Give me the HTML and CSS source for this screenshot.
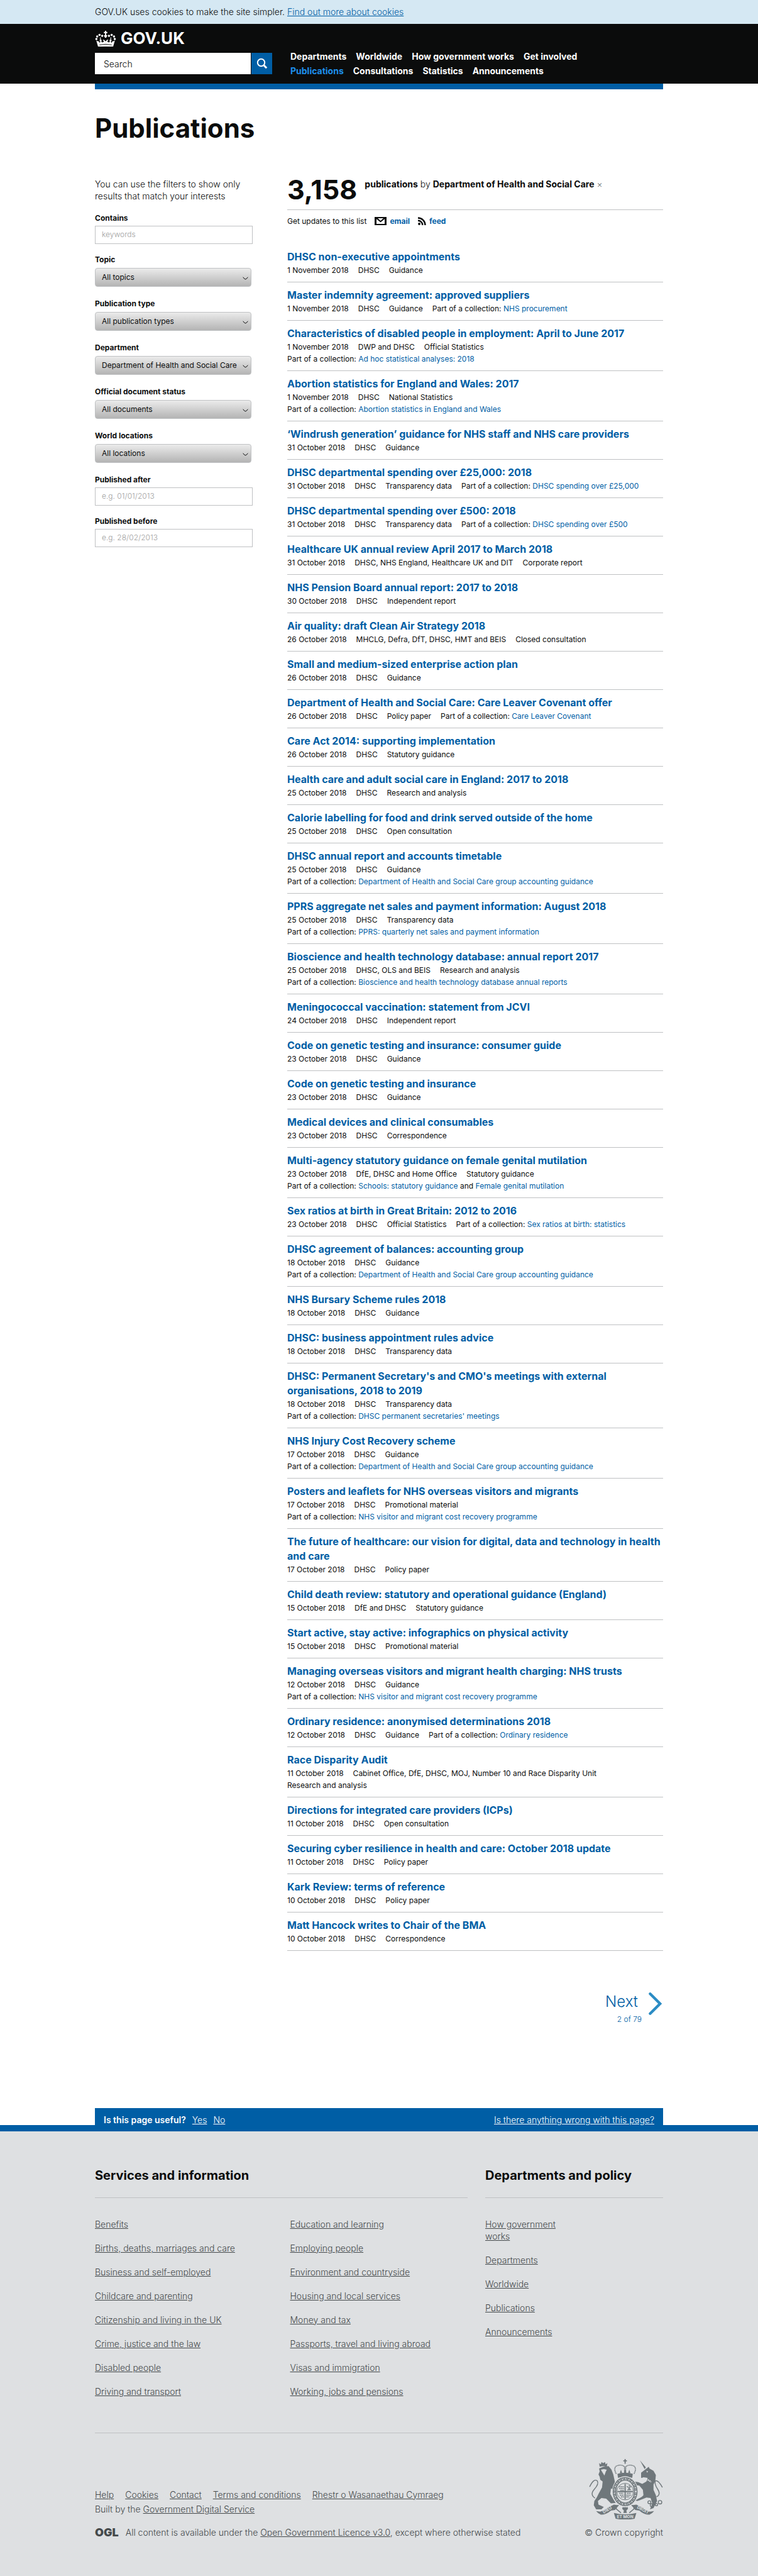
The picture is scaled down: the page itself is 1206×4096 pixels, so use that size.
FILE: index.html
```html
<!DOCTYPE html>
<html lang="en">
<head>
<meta charset="utf-8">
<meta name="viewport" content="width=device-width, initial-scale=1">
<title>Publications - GOV.UK</title>
<link rel="stylesheet" href="styles.css">
</head>
<body>

<div class="cookie-bar">
  <p class="container">GOV.UK uses cookies to make the site simpler. <a href="#">Find out more about cookies</a></p>
</div>

<header class="site-header">
  <div class="container header-inner">
    <div class="header-left">
      <a class="logo" href="#">
        <svg class="logo-crown" viewBox="0 0 36 27" aria-hidden="true">
          <g fill="currentColor">
            <path d="M17 0h2v2h2v2h-2v3l2 1-2 4h-2l-2-4 2-1V4h-2V2h2z"/>
            <circle cx="2.2" cy="14" r="1.9"/><circle cx="3.6" cy="9.6" r="1.9"/><circle cx="7.6" cy="7" r="1.9"/><circle cx="12.2" cy="8.6" r="1.9"/>
            <circle cx="33.8" cy="14" r="1.9"/><circle cx="32.4" cy="9.6" r="1.9"/><circle cx="28.4" cy="7" r="1.9"/><circle cx="23.8" cy="8.6" r="1.9"/>
            <path d="M2 16.5q2 2 4.5 1.500L8 21l1-3-1.500-1.500L9 14l-1-1.500L9 11l1 1.500L9.500 14l2 2.500L10.500 18l1.500 2 3-1-.5-2L13 16l2-1 3 3 3-3 2 1-1.500 1-.5 2 3 1 1.500-2-1-1.500 2-2.500-.5-1.500 1-1.500 1 1.500-1 1.500 1.500 2.500-1.500 1.500 1 3 1.500-3q2.500.5 4.500-1.500L31 27H5z"/>
          </g>
          <path d="M7.500 24.200q10.500-2.200 21 0" fill="none" stroke="#0b0c0c" stroke-width="1"/>
        </svg>
        <span>GOV.UK</span>
      </a>
      <form class="search" role="search">
        <input type="search" placeholder="Search" aria-label="Search">
        <button type="button" aria-label="Search">
          <svg viewBox="0 0 18 18" aria-hidden="true"><circle cx="7.500" cy="7.500" r="5.700" fill="none" stroke="#fff" stroke-width="2"/><path d="M11.500 11.500l4.700 4.700" stroke="#fff" stroke-width="3"/></svg>
        </button>
      </form>
    </div>
    <nav class="main-nav">
      <ul>
        <li><a href="#">Departments</a></li>
        <li><a href="#">Worldwide</a></li>
        <li><a href="#">How government works</a></li>
        <li><a href="#">Get involved</a></li>
      </ul>
      <ul>
        <li><a class="current" href="#">Publications</a></li>
        <li><a href="#">Consultations</a></li>
        <li><a href="#">Statistics</a></li>
        <li><a href="#">Announcements</a></li>
      </ul>
    </nav>
  </div>
</header>
<div class="container blue-rule"></div>

<main class="container">
  <h1>Publications</h1>
  <div class="columns">
    <form class="filters">
      <p>You can use the filters to show only results that match your interests</p>
      <div class="field">
        <label for="contains">Contains</label>
        <input id="contains" type="text" placeholder="keywords">
      </div>
      <div class="field field-select">
        <label for="topic">Topic</label>
        <div class="select"><select id="topic"><option>All topics</option></select><svg viewBox="0 0 9 5"><path d="M.7.7Q3 4 4.500 4T8.300.7"/></svg></div>
      </div>
      <div class="field field-select">
        <label for="pubtype">Publication type</label>
        <div class="select"><select id="pubtype"><option>All publication types</option></select><svg viewBox="0 0 9 5"><path d="M.7.7Q3 4 4.500 4T8.300.7"/></svg></div>
      </div>
      <div class="field field-select">
        <label for="department">Department</label>
        <div class="select"><select id="department"><option>Department of Health and Social Care</option></select><svg viewBox="0 0 9 5"><path d="M.7.7Q3 4 4.500 4T8.300.7"/></svg></div>
      </div>
      <div class="field field-select">
        <label for="status">Official document status</label>
        <div class="select"><select id="status"><option>All documents</option></select><svg viewBox="0 0 9 5"><path d="M.7.7Q3 4 4.500 4T8.300.7"/></svg></div>
      </div>
      <div class="field field-select">
        <label for="locations">World locations</label>
        <div class="select"><select id="locations"><option>All locations</option></select><svg viewBox="0 0 9 5"><path d="M.7.7Q3 4 4.500 4T8.300.7"/></svg></div>
      </div>
      <div class="field">
        <label for="after">Published after</label>
        <input id="after" type="text" placeholder="e.g. 01/01/2013">
      </div>
      <div class="field">
        <label for="before">Published before</label>
        <input id="before" type="text" placeholder="e.g. 28/02/2013">
      </div>
    </form>

    <div class="results">
      <div class="summary">
        <span class="count">3,158</span>
        <p><b>publications</b> by <b>Department of Health and Social Care</b> <a href="#" aria-label="Remove filter">×</a></p>
      </div>
      <div class="updates">
        <span>Get updates to this list</span>
        <a href="#"><svg class="icon-mail" viewBox="0 0 19 13" aria-hidden="true"><path fill="#0b0c0c" d="M0 0h19v13H0z"/><path fill="#fff" d="M3 3.300l6.500 5.200L16 3.300V11H3z"/><path fill="#fff" d="M5 2h9L9.500 6z"/></svg>email</a>
        <a href="#"><svg class="icon-feed" viewBox="0 0 13 13" aria-hidden="true"><circle cx="2" cy="11" r="1.900" fill="#0b0c0c"/><path d="M0 5.700a7.200 7.200 0 0 1 7.300 7.300M0 1.500A11.500 11.500 0 0 1 11.500 13" fill="none" stroke="#0b0c0c" stroke-width="2.400"/></svg>feed</a>
      </div>

      <ol class="documents">
        <li><h2><a href="#">DHSC non-executive appointments</a></h2><ul><li>1 November 2018</li><li>DHSC</li><li>Guidance</li></ul></li>
        <li><h2><a href="#">Master indemnity agreement: approved suppliers</a></h2><ul><li>1 November 2018</li><li>DHSC</li><li>Guidance</li><li>Part of a collection: <a href="#">NHS procurement</a></li></ul></li>
        <li><h2><a href="#">Characteristics of disabled people in employment: April to June 2017</a></h2><ul><li>1 November 2018</li><li>DWP and DHSC</li><li>Official Statistics</li><li>Part of a collection: <a href="#">Ad hoc statistical analyses: 2018</a></li></ul></li>
        <li><h2><a href="#">Abortion statistics for England and Wales: 2017</a></h2><ul><li>1 November 2018</li><li>DHSC</li><li>National Statistics</li><li>Part of a collection: <a href="#">Abortion statistics in England and Wales</a></li></ul></li>
        <li><h2><a href="#">‘Windrush generation’ guidance for NHS staff and NHS care providers</a></h2><ul><li>31 October 2018</li><li>DHSC</li><li>Guidance</li></ul></li>
        <li><h2><a href="#">DHSC departmental spending over £25,000: 2018</a></h2><ul><li>31 October 2018</li><li>DHSC</li><li>Transparency data</li><li>Part of a collection: <a href="#">DHSC spending over £25,000</a></li></ul></li>
        <li><h2><a href="#">DHSC departmental spending over £500: 2018</a></h2><ul><li>31 October 2018</li><li>DHSC</li><li>Transparency data</li><li>Part of a collection: <a href="#">DHSC spending over £500</a></li></ul></li>
        <li><h2><a href="#">Healthcare UK annual review April 2017 to March 2018</a></h2><ul><li>31 October 2018</li><li>DHSC, NHS England, Healthcare UK and DIT</li><li>Corporate report</li></ul></li>
        <li><h2><a href="#">NHS Pension Board annual report: 2017 to 2018</a></h2><ul><li>30 October 2018</li><li>DHSC</li><li>Independent report</li></ul></li>
        <li><h2><a href="#">Air quality: draft Clean Air Strategy 2018</a></h2><ul><li>26 October 2018</li><li>MHCLG, Defra, DfT, DHSC, HMT and BEIS</li><li>Closed consultation</li></ul></li>
        <li><h2><a href="#">Small and medium-sized enterprise action plan</a></h2><ul><li>26 October 2018</li><li>DHSC</li><li>Guidance</li></ul></li>
        <li><h2><a href="#">Department of Health and Social Care: Care Leaver Covenant offer</a></h2><ul><li>26 October 2018</li><li>DHSC</li><li>Policy paper</li><li>Part of a collection: <a href="#">Care Leaver Covenant</a></li></ul></li>
        <li><h2><a href="#">Care Act 2014: supporting implementation</a></h2><ul><li>26 October 2018</li><li>DHSC</li><li>Statutory guidance</li></ul></li>
        <li><h2><a href="#">Health care and adult social care in England: 2017 to 2018</a></h2><ul><li>25 October 2018</li><li>DHSC</li><li>Research and analysis</li></ul></li>
        <li><h2><a href="#">Calorie labelling for food and drink served outside of the home</a></h2><ul><li>25 October 2018</li><li>DHSC</li><li>Open consultation</li></ul></li>
        <li><h2><a href="#">DHSC annual report and accounts timetable</a></h2><ul><li>25 October 2018</li><li>DHSC</li><li>Guidance</li><li>Part of a collection: <a href="#">Department of Health and Social Care group accounting guidance</a></li></ul></li>
        <li><h2><a href="#">PPRS aggregate net sales and payment information: August 2018</a></h2><ul><li>25 October 2018</li><li>DHSC</li><li>Transparency data</li><li>Part of a collection: <a href="#">PPRS: quarterly net sales and payment information</a></li></ul></li>
        <li><h2><a href="#">Bioscience and health technology database: annual report 2017</a></h2><ul><li>25 October 2018</li><li>DHSC, OLS and BEIS</li><li>Research and analysis</li><li>Part of a collection: <a href="#">Bioscience and health technology database annual reports</a></li></ul></li>
        <li><h2><a href="#">Meningococcal vaccination: statement from JCVI</a></h2><ul><li>24 October 2018</li><li>DHSC</li><li>Independent report</li></ul></li>
        <li><h2><a href="#">Code on genetic testing and insurance: consumer guide</a></h2><ul><li>23 October 2018</li><li>DHSC</li><li>Guidance</li></ul></li>
        <li><h2><a href="#">Code on genetic testing and insurance</a></h2><ul><li>23 October 2018</li><li>DHSC</li><li>Guidance</li></ul></li>
        <li><h2><a href="#">Medical devices and clinical consumables</a></h2><ul><li>23 October 2018</li><li>DHSC</li><li>Correspondence</li></ul></li>
        <li><h2><a href="#">Multi-agency statutory guidance on female genital mutilation</a></h2><ul><li>23 October 2018</li><li>DfE, DHSC and Home Office</li><li>Statutory guidance</li><li>Part of a collection: <a href="#">Schools: statutory guidance</a> and <a href="#">Female genital mutilation</a></li></ul></li>
        <li><h2><a href="#">Sex ratios at birth in Great Britain: 2012 to 2016</a></h2><ul><li>23 October 2018</li><li>DHSC</li><li>Official Statistics</li><li>Part of a collection: <a href="#">Sex ratios at birth: statistics</a></li></ul></li>
        <li><h2><a href="#">DHSC agreement of balances: accounting group</a></h2><ul><li>18 October 2018</li><li>DHSC</li><li>Guidance</li><li>Part of a collection: <a href="#">Department of Health and Social Care group accounting guidance</a></li></ul></li>
        <li><h2><a href="#">NHS Bursary Scheme rules 2018</a></h2><ul><li>18 October 2018</li><li>DHSC</li><li>Guidance</li></ul></li>
        <li><h2><a href="#">DHSC: business appointment rules advice</a></h2><ul><li>18 October 2018</li><li>DHSC</li><li>Transparency data</li></ul></li>
        <li><h2><a href="#">DHSC: Permanent Secretary's and CMO's meetings with external organisations, 2018 to 2019</a></h2><ul><li>18 October 2018</li><li>DHSC</li><li>Transparency data</li><li>Part of a collection: <a href="#">DHSC permanent secretaries' meetings</a></li></ul></li>
        <li><h2><a href="#">NHS Injury Cost Recovery scheme</a></h2><ul><li>17 October 2018</li><li>DHSC</li><li>Guidance</li><li>Part of a collection: <a href="#">Department of Health and Social Care group accounting guidance</a></li></ul></li>
        <li><h2><a href="#">Posters and leaflets for NHS overseas visitors and migrants</a></h2><ul><li>17 October 2018</li><li>DHSC</li><li>Promotional material</li><li>Part of a collection: <a href="#">NHS visitor and migrant cost recovery programme</a></li></ul></li>
        <li><h2><a href="#">The future of healthcare: our vision for digital, data and technology in health and care</a></h2><ul><li>17 October 2018</li><li>DHSC</li><li>Policy paper</li></ul></li>
        <li><h2><a href="#">Child death review: statutory and operational guidance (England)</a></h2><ul><li>15 October 2018</li><li>DfE and DHSC</li><li>Statutory guidance</li></ul></li>
        <li><h2><a href="#">Start active, stay active: infographics on physical activity</a></h2><ul><li>15 October 2018</li><li>DHSC</li><li>Promotional material</li></ul></li>
        <li><h2><a href="#">Managing overseas visitors and migrant health charging: NHS trusts</a></h2><ul><li>12 October 2018</li><li>DHSC</li><li>Guidance</li><li>Part of a collection: <a href="#">NHS visitor and migrant cost recovery programme</a></li></ul></li>
        <li><h2><a href="#">Ordinary residence: anonymised determinations 2018</a></h2><ul><li>12 October 2018</li><li>DHSC</li><li>Guidance</li><li>Part of a collection: <a href="#">Ordinary residence</a></li></ul></li>
        <li><h2><a href="#">Race Disparity Audit</a></h2><ul><li>11 October 2018</li><li>Cabinet Office, DfE, DHSC, MOJ, Number 10 and Race Disparity Unit</li><li>Research and analysis</li></ul></li>
        <li><h2><a href="#">Directions for integrated care providers (ICPs)</a></h2><ul><li>11 October 2018</li><li>DHSC</li><li>Open consultation</li></ul></li>
        <li><h2><a href="#">Securing cyber resilience in health and care: October 2018 update</a></h2><ul><li>11 October 2018</li><li>DHSC</li><li>Policy paper</li></ul></li>
        <li><h2><a href="#">Kark Review: terms of reference</a></h2><ul><li>10 October 2018</li><li>DHSC</li><li>Policy paper</li></ul></li>
        <li><h2><a href="#">Matt Hancock writes to Chair of the BMA</a></h2><ul><li>10 October 2018</li><li>DHSC</li><li>Correspondence</li></ul></li>
      </ol>

      <nav class="pagination" aria-label="Pagination">
        <a href="#">
          <span class="next"><span>Next</span><small>2 of 79</small></span>
          <svg viewBox="0 0 22 38" aria-hidden="true"><path d="M2.500 2.500L19 19 2.500 35.500" fill="none" stroke="#2b8cc4" stroke-width="4.500" stroke-linecap="round"/></svg>
        </a>
      </nav>
    </div>
  </div>
</main>

<div class="feedback">
  <div class="container feedback-bar">
    <b>Is this page useful?</b> <a href="#">Yes</a> <a href="#">No</a>
    <a class="wrong" href="#">Is there anything wrong with this page?</a>
  </div>
</div>

<footer class="site-footer">
  <div class="container">
    <div class="footer-links">
      <section class="services">
        <h2>Services and information</h2>
        <ul>
          <li><a href="#">Benefits</a></li>
          <li><a href="#">Births, deaths, marriages and care</a></li>
          <li><a href="#">Business and self-employed</a></li>
          <li><a href="#">Childcare and parenting</a></li>
          <li><a href="#">Citizenship and living in the UK</a></li>
          <li><a href="#">Crime, justice and the law</a></li>
          <li><a href="#">Disabled people</a></li>
          <li><a href="#">Driving and transport</a></li>
          <li><a href="#">Education and learning</a></li>
          <li><a href="#">Employing people</a></li>
          <li><a href="#">Environment and countryside</a></li>
          <li><a href="#">Housing and local services</a></li>
          <li><a href="#">Money and tax</a></li>
          <li><a href="#">Passports, travel and living abroad</a></li>
          <li><a href="#">Visas and immigration</a></li>
          <li><a href="#">Working, jobs and pensions</a></li>
        </ul>
      </section>
      <section class="policy">
        <h2>Departments and policy</h2>
        <ul>
          <li><a href="#">How government works</a></li>
          <li><a href="#">Departments</a></li>
          <li><a href="#">Worldwide</a></li>
          <li><a href="#">Publications</a></li>
          <li><a href="#">Announcements</a></li>
        </ul>
      </section>
    </div>
    <div class="footer-meta">
      <div class="legal">
        <ul>
          <li><a href="#">Help</a></li>
          <li><a href="#">Cookies</a></li>
          <li><a href="#">Contact</a></li>
          <li><a href="#">Terms and conditions</a></li>
          <li><a href="#">Rhestr o Wasanaethau Cymraeg</a></li>
        </ul>
        <p>Built by the <a href="#">Government Digital Service</a></p>
        <div class="licence">
          <span class="ogl">OGL</span>
          <p>All content is available under the <a href="#">Open Government Licence v3.0</a>, except where otherwise stated</p>
        </div>
      </div>
      <div class="crest">
        <svg viewBox="0 0 125 102" aria-hidden="true">
          <g fill="#6f777b">
            <path d="M60 0h2v2h2v2h-2v4h-2V4h-2V2h2z"/>
            <path d="M48 25q13-4 26 0l-1 7q-12-4-24 0z"/>
            <path d="M52 24l2-6 2 6zM59 24l2-8 2 8zM66 24l2-6 2 6z"/>
            <path d="M18 13l-1-6 3 2 1-4 3 2 3-2 1 4 3-2-1 6-6-1z"/>
            <path d="M17 16l7-3 9-1 5 6 3 8 2 9 1 6 2 8-1 3-8-2-1 9 5 9 4 6-8 1-8-8-8-1-6 5 1 6 9 4-4 4h-9l-4-7 1-7 4-6 3-6 6-11 1-10-4-3-1-5-2-4 2-5z"/>
            <path d="M86 2l10 12-2 3z"/>
            <path d="M88 23l8-6 5-4 1 3 7 4 4 7-1 10-3 6v9l4 9 2 10-6 12-6 2 4-10-3-9-7-1-15 6-4-1 11-6 3-3-1-9-6-7-6-1-3-6 7 1 7 3 7-4 2-6-5-1-6 1z"/>
            <path d="M12 88l7 1q7-2 13-7l10-5 8 1-6 8-7 1q-8 7-17 7-5-2-8-6zM110 88l-7 1q-7-2-13-7l-10-5-8 1 6 8 7 1q8 7 17 7 5-2 8-6z"/>
            <path d="M42 91q19 5 38 0l-3 10q-16 3-32 0z"/>
            <path d="M60 82l1-3 1 3 3-1 1 3-3 3 1 4h-6l1-4-3-3 1-3z"/>
          </g>
          <g fill="none" stroke="#6f777b" stroke-width="1.500">
            <path d="M10 66Q1 60 9 51T14 37Q8 32 1 47"/>
            <path d="M114 64q8-4 2-13t-4-14q5-2 12 11"/>
            <path d="M46 25q-5-9 0-13 8-4 14 1v10M76 25q5-9 0-13-8-4-14 1v10" stroke-dasharray="2 .6"/>
            <circle cx="102" cy="73" r="2.500"/><circle cx="106" cy="78" r="2.500"/><circle cx="114" cy="77" r="2"/><circle cx="120" cy="73" r="3"/>
            <path d="M50 78q-7 5-2 8l6 5M72 78q7 5 2 8l-6 5"/>
          </g>
          <path d="M20 18l5-1 5 1-2 4-2 6-3-5zM97 20l3 1-2 2z" fill="#dee0e2"/>
          <path d="M91 32q8 2 14 7" fill="none" stroke="#dee0e2" stroke-width="2.500" stroke-dasharray="2 1"/>
          <ellipse cx="61" cy="55" rx="22" ry="26" fill="#dee0e2"/>
          <ellipse cx="61" cy="55" rx="18" ry="21.500" fill="none" stroke="#6f777b" stroke-width="6"/>
          <ellipse cx="61" cy="55" rx="18" ry="21.500" fill="none" stroke="#dee0e2" stroke-width="3" stroke-dasharray="1.500 1.500 .8 2"/>
          <circle cx="61" cy="55" r="14" fill="#dee0e2" stroke="#6f777b" stroke-width="1"/>
          <path d="M61 42v26M48 55h26" stroke="#6f777b" stroke-width="2"/>
          <path d="M51 47h8M51 50h8M53 53h6M64 46l7 7M71 46l-6 7M68 44v9M51 58h7M52 61h7M54 64h5M64 58h7M63 61h8M63 64h5" stroke="#6f777b" stroke-width="1.600" stroke-dasharray="2.500 .7"/>
          <g class="motto"><text x="61" y="99.500">ET MON</text><text x="32" y="88" transform="rotate(-30 32 88)">DIEU</text><text x="90" y="88" transform="rotate(28 90 88)">DROIT</text></g>
        </svg>
        <a href="#">© Crown copyright</a>
      </div>
    </div>
  </div>
</footer>
</body>
</html>
```
FILE: styles.css
```css
* { box-sizing: border-box; }

body {
  margin: 0;
  background: #fff;
  color: #0b0c0c;
  font: 300 14px/19px Inter, "Liberation Sans", sans-serif;
}

h1, h2, p, ul, ol { margin: 0; padding: 0; }
ul, ol { list-style: none; }
input, select, button { font: inherit; border-radius: 0; margin: 0; }
a { color: #005ea5; }
svg { display: block; }

.container {
  width: min(904px, 100% - 60px);
  margin: 0 auto;
}

/* Cookie message */
.cookie-bar {
  background: #d5e8f3;
  padding: 9px 0 10px;
}

/* Header */
.site-header {
  background: #0b0c0c;
  color: #fff;
  padding: 10px 0 9px;
}
.header-inner {
  display: grid;
  grid-template-columns: 282px 1fr;
  column-gap: 29px;
  align-items: end;
}
.header-left { padding-bottom: 6px; }
.logo {
  display: flex;
  align-items: center;
  gap: 7px;
  height: 26px;
  color: #fff;
  font-size: 26px;
  line-height: 26px;
  font-weight: 700;
  text-decoration: none;
}
.logo-crown { width: 34px; height: 25px; }
.search {
  display: flex;
  gap: 1px;
  margin-top: 10px;
}
.search input {
  flex: 1;
  min-width: 0;
  height: 34px;
  border: 0;
  padding: 0 14px;
  background: #fff;
  color: #0b0c0c;
}
.search input::placeholder { color: #0b0c0c; opacity: 1; }
.search button {
  display: grid;
  place-items: center;
  width: 33px;
  height: 34px;
  border: 0;
  padding: 0;
  background: #005ea5;
}
.search svg { width: 18px; height: 18px; }
.main-nav ul {
  display: flex;
  column-gap: 15px;
  line-height: 23px;
  font-weight: 700;
}
.main-nav a { color: #fff; text-decoration: none; }
.main-nav .current { color: #1d8feb; }
.blue-rule { height: 9px; background: #005ea5; }

/* Page */
h1 {
  padding: 39px 0 60px;
  font-size: 42px;
  line-height: 46px;
  font-weight: 700;
}
.columns {
  display: grid;
  grid-template-columns: 251px minmax(0, 1fr);
  column-gap: 55px;
}

/* Filters */
.filters > p { padding: 0 10px 16px 0; margin-top: -4px; }
.field { margin-bottom: 15px; }
.field-select { margin-bottom: 17px; }
.field label {
  display: block;
  margin-bottom: 3px;
  font-size: 12px;
  line-height: 19px;
  font-weight: 700;
}
.field-select label { margin-bottom: 4px; }
.field input {
  display: block;
  width: 100%;
  height: 29px;
  border: 1px solid #bfc1c3;
  padding: 0 10px 2px;
  font-size: 12px;
}
.field input::placeholder { color: #a0a0a0; opacity: 1; }
.select { position: relative; margin-right: 2px; }
.select select {
  display: block;
  width: 100%;
  height: 30px;
  appearance: none;
  border: 1px solid #bfc1c3;
  border-radius: 4px;
  padding: 0 22px 2px 10px;
  background: linear-gradient(#ebebeb, #b4b4b4);
  color: #0b0c0c;
  font-size: 12px;
  font-weight: 400;
}
.select svg {
  position: absolute;
  right: 5px;
  top: 14px;
  width: 9px;
  height: 5px;
  fill: none;
  stroke: #0b0c0c;
  pointer-events: none;
}

/* Results */
.summary {
  display: flex;
  gap: 12px;
  border-bottom: 1px solid #bfc1c3;
  padding-bottom: 18px;
}
.count {
  font-size: 43px;
  line-height: 28px;
  font-weight: 700;
}
.summary p { margin-top: -4px; }
.summary b { font-weight: 700; }
.summary a { color: #6f777b; text-decoration: none; }
.updates {
  display: flex;
  align-items: center;
  gap: 13px;
  padding-top: 8px;
  margin-bottom: 27px;
  font-size: 12px;
  font-weight: 400;
}
.updates a {
  display: flex;
  align-items: center;
  gap: 5px;
  font-weight: 700;
  text-decoration: none;
}
.icon-mail { width: 19px; height: 13px; }
.icon-feed { width: 13px; height: 13px; }
.documents > li {
  border-bottom: 1px solid #bfc1c3;
  padding: 9px 0 9px;
}
.documents h2 {
  font-size: 16px;
  line-height: 23px;
  font-weight: 700;
}
.documents a { text-decoration: none; }
.documents ul {
  display: flex;
  flex-wrap: wrap;
  column-gap: 15px;
  font-size: 12px;
  line-height: 19px;
  font-weight: 400;
}

/* Pagination */
.pagination {
  display: flex;
  justify-content: flex-end;
  padding: 63px 2px 0 0;
  margin-bottom: 131px;
}
.pagination a {
  display: flex;
  gap: 11px;
  text-decoration: none;
}
.next { display: grid; justify-items: end; }
.next span { padding-right: 6px; font-size: 24px; line-height: 36px; }
.next small { font-size: 12px; line-height: 20px; }
.pagination svg { width: 21px; height: 38px; margin-top: 2px; }

/* Feedback */
.feedback {
  background: linear-gradient(#005ea5, #005ea5) bottom / 100% 10px no-repeat;
}
.feedback-bar {
  display: flex;
  column-gap: 10px;
  background: #005ea5;
  color: #fff;
  padding: 9px 14px;
}
.feedback-bar b { font-weight: 600; }
.feedback-bar a { color: #fff; }
.feedback-bar .wrong { margin-left: auto; }

/* Footer */
.site-footer {
  background: #dee0e2;
  color: #454a4c;
  padding: 56px 0 60px;
}
.site-footer a { color: #454a4c; }
.footer-links {
  display: grid;
  grid-template-columns: 593px 1fr;
  column-gap: 28px;
  border-bottom: 1px solid #bfc1c3;
  padding-bottom: 37px;
}
.footer-links h2 {
  border-bottom: 1px solid #bfc1c3;
  padding-bottom: 21px;
  margin-bottom: 32px;
  color: #0b0c0c;
  font-size: 20px;
  line-height: 28px;
  font-weight: 700;
}
.footer-links li { margin-bottom: 19px; break-inside: avoid; }
.services ul { columns: 2; column-gap: 28px; }
.policy ul { width: 140px; }
.footer-meta {
  display: flex;
  justify-content: space-between;
  align-items: flex-end;
  padding-top: 41px;
}
.legal ul {
  display: flex;
  flex-wrap: wrap;
  column-gap: 18px;
  margin-bottom: 4px;
}
.licence {
  display: flex;
  gap: 11px;
  margin-top: 18px;
}
.ogl { font-size: 18px; font-weight: 900; }
.crest {
  display: grid;
  justify-items: end;
  row-gap: 11px;
}
.crest svg { width: 118px; height: 96px; }
.crest a { text-decoration: none; }
.motto {
  fill: #dee0e2;
  font-size: 7px;
  font-weight: 700;
  text-anchor: middle;
}
```
